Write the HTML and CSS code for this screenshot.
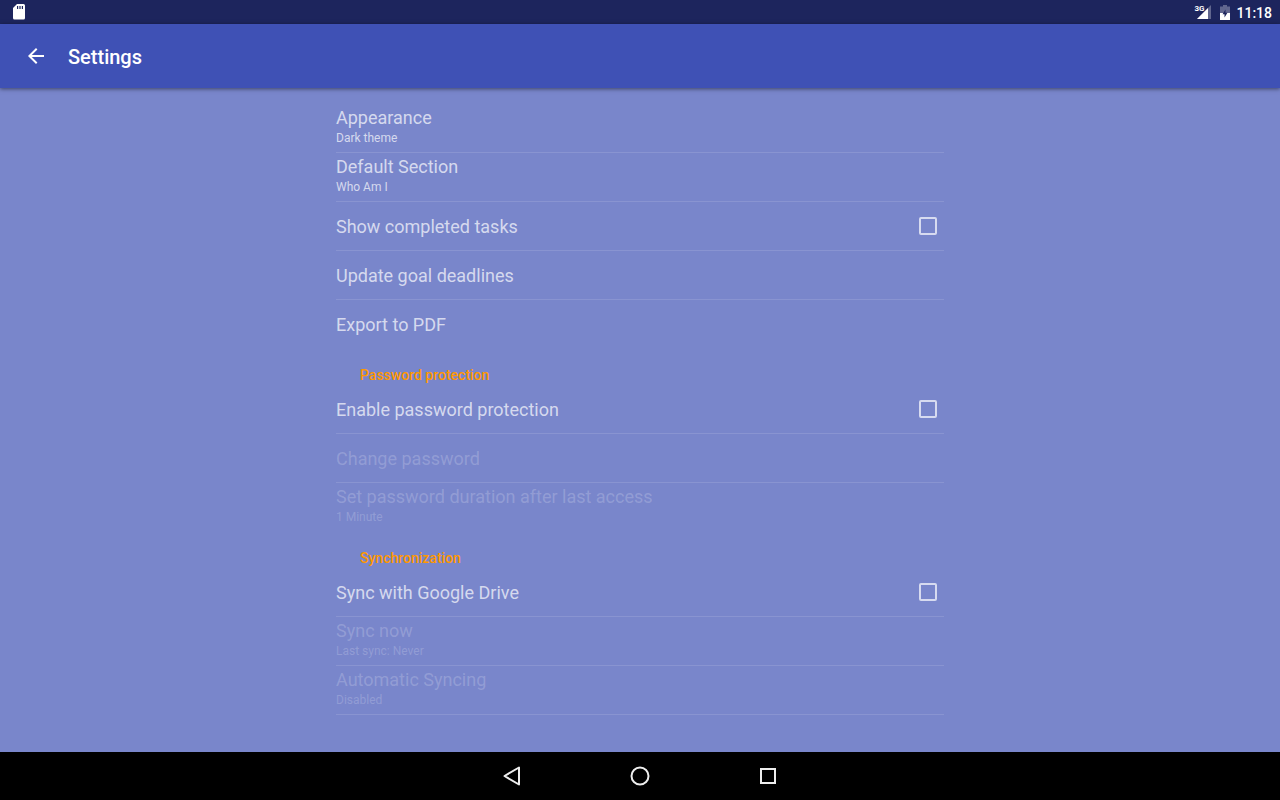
FILE: index.html
```html
<!DOCTYPE html>
<html lang="en">
<head>
    <meta charset="UTF-8">
    <meta name="viewport" content="width=device-width, initial-scale=1.0">
    <title>Settings</title>
    <link rel="stylesheet" href="styles.css">
</head>
<body>
    <div class="status-bar">
        <svg class="sd-icon" width="14" height="16" viewBox="0 0 14 16">
            <path fill="#fff" fill-rule="evenodd" d="M5 0h6.500a1.500 1.500 0 0 1 1.500 1.500v12.500a1.500 1.500 0 0 1-1.500 1.500h-9A1.500 1.500 0 0 1 1 14V4zM5 2v3h1.200V2zM7.400 2v3h1.200V2zM9.800 2v3H11V2z"/>
        </svg>
        <div class="status-right">
            <span class="signal">
                <span class="network">3G</span>
                <svg width="14" height="14" viewBox="0 0 14 14">
                    <path fill="#fff" fill-opacity=".3" d="M14 0v14H0z"/>
                    <path fill="#fff" d="M11 3v11H0z"/>
                </svg>
            </span>
            <svg class="battery" width="10" height="15" viewBox="0 0 10 15">
                <path fill="#fff" fill-opacity=".3" d="M3 0h4v1.500h3V8H0V1.500h3z"/>
                <path fill="#fff" d="M0 8h10v7H0z"/>
                <path fill="#1d255d" d="M5.500 4.500 2.500 9.200h2V12.500L7.500 7.800h-2z"/>
            </svg>
            <span class="clock">11:18</span>
        </div>
    </div>

    <header class="toolbar">
        <button class="back-btn" aria-label="Back">
            <svg width="24" height="24" viewBox="0 0 24 24">
                <path fill="#fff" d="M20 11H7.830l5.590-5.590L12 4l-8 8 8 8 1.410-1.410L7.830 13H20v-2z"/>
            </svg>
        </button>
        <h1>Settings</h1>
    </header>

    <main class="content">
        <section class="group">
            <button class="row two-line">
                <span class="title">Appearance</span>
                <span class="summary">Dark theme</span>
            </button>
            <button class="row two-line">
                <span class="title">Default Section</span>
                <span class="summary">Who Am I</span>
            </button>
            <label class="row check-row" for="show-completed">
                <span class="title">Show completed tasks</span>
                <input type="checkbox" class="checkbox" id="show-completed">
            </label>
            <button class="row"><span class="title">Update goal deadlines</span></button>
            <button class="row"><span class="title">Export to PDF</span></button>
        </section>

        <section class="group">
            <h2>Password protection</h2>
            <label class="row check-row" for="enable-password">
                <span class="title">Enable password protection</span>
                <input type="checkbox" class="checkbox" id="enable-password">
            </label>
            <button class="row" disabled><span class="title">Change password</span></button>
            <button class="row two-line" disabled>
                <span class="title">Set password duration after last access</span>
                <span class="summary">1 Minute</span>
            </button>
        </section>

        <section class="group last">
            <h2>Synchronization</h2>
            <label class="row check-row" for="sync-drive">
                <span class="title">Sync with Google Drive</span>
                <input type="checkbox" class="checkbox" id="sync-drive">
            </label>
            <button class="row two-line" disabled>
                <span class="title">Sync now</span>
                <span class="summary">Last sync: Never</span>
            </button>
            <button class="row two-line" disabled>
                <span class="title">Automatic Syncing</span>
                <span class="summary">Disabled</span>
            </button>
        </section>
    </main>

    <nav class="nav-bar">
        <button class="nav-btn" aria-label="Back">
            <svg width="24" height="24" viewBox="0 0 24 24">
                <path fill="none" stroke="#eee" stroke-width="2" stroke-linejoin="round" d="M19 3.500v17L4.500 12z"/>
            </svg>
        </button>
        <button class="nav-btn" aria-label="Home">
            <svg width="24" height="24" viewBox="0 0 24 24">
                <circle cx="12" cy="12" r="8.500" fill="none" stroke="#eee" stroke-width="2"/>
            </svg>
        </button>
        <button class="nav-btn" aria-label="Overview">
            <svg width="24" height="24" viewBox="0 0 24 24">
                <path fill="none" stroke="#eee" stroke-width="2" d="M5 5h14v14H5z"/>
            </svg>
        </button>
    </nav>
</body>
</html>
```
FILE: styles.css
```css
* {
    box-sizing: border-box;
}
body {
    font-family: Roboto, sans-serif;
    background-color: #7986cb;
    color: #fff;
    margin: 0;
    display: flex;
    flex-direction: column;
    min-height: 100vh;
}
button {
    font-family: inherit;
    color: inherit;
    background: none;
    border: none;
    padding: 0;
    cursor: pointer;
}
svg {
    display: block;
}

/* status bar */
.status-bar {
    display: flex;
    align-items: center;
    justify-content: space-between;
    height: 24px;
    padding: 0 8px 0 12px;
    background-color: #1d255d;
}
.status-right {
    display: flex;
    align-items: center;
}
.signal {
    position: relative;
    margin-right: 9px;
}
.network {
    position: absolute;
    top: 0;
    left: -3px;
    font-size: 8px;
    font-weight: 700;
    line-height: 8px;
}
.battery {
    margin-right: 6px;
}
.clock {
    padding-top: 2px;
    font-size: 14px;
    font-weight: 500;
    line-height: 22px;
}

/* toolbar */
.toolbar {
    display: flex;
    align-items: center;
    gap: 20px;
    height: 64px;
    padding: 0 24px;
    background-color: #3f51b5;
    box-shadow: 0 1px 4px rgba(0, 0, 0, 0.5);
}
h1 {
    margin: 0;
    padding-top: 2px;
    font-size: 20px;
    font-weight: 500;
    line-height: 24px;
}

/* settings list */
.content {
    flex: 1;
    width: 100%;
    max-width: 640px;
    margin: 0 auto;
    padding: 16px;
}
.row {
    display: flex;
    align-items: center;
    width: 100%;
    height: 49px;
    border-bottom: 1px solid rgba(255, 255, 255, 0.12);
    color: rgba(255, 255, 255, 0.7);
    text-align: left;
    cursor: pointer;
}
.row:last-child {
    height: 48px;
    border-bottom: none;
}
.last .row:last-child {
    height: 49px;
    border-bottom: 1px solid rgba(255, 255, 255, 0.12);
}
.row:disabled {
    color: rgba(255, 255, 255, 0.2);
    cursor: default;
}
.two-line {
    flex-direction: column;
    align-items: flex-start;
    justify-content: flex-start;
}
.title {
    padding-top: 2px;
    font-size: 18px;
    line-height: 24px;
}
.summary {
    font-size: 12px;
    line-height: 16px;
}
.check-row {
    justify-content: space-between;
}
.checkbox {
    appearance: none;
    width: 18px;
    height: 18px;
    margin: 0 7px 0 0;
    border: 2px solid rgba(255, 255, 255, 0.7);
    border-radius: 2px;
    cursor: pointer;
}
.checkbox:checked {
    background-color: #ff9800;
    border-color: #ff9800;
}
h2 {
    margin: 0;
    padding: 18px 24px 0;
    color: #ff9800;
    font-size: 14px;
    font-weight: 500;
    line-height: 19px;
}

/* navigation bar */
.nav-bar {
    display: flex;
    align-items: center;
    justify-content: center;
    gap: 104px;
    height: 48px;
    background-color: #000;
}
```
